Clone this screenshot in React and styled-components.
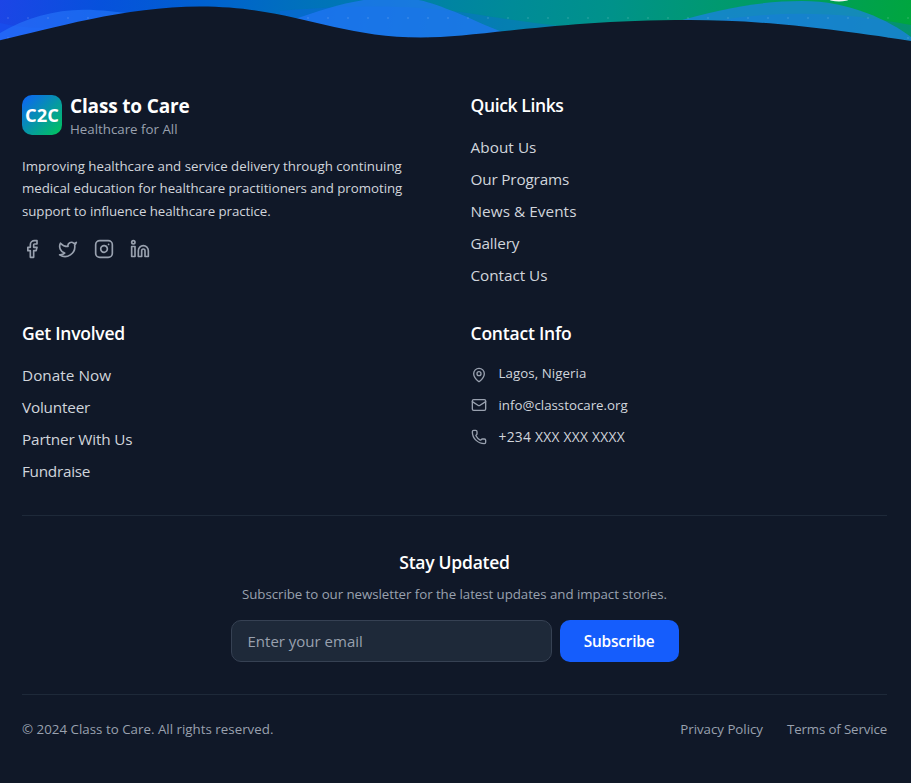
import React from "react";
import styled, { createGlobalStyle } from "styled-components";
import { Facebook, Twitter, Instagram, Linkedin, MapPin, Mail, Phone } from "lucide-react";

const GlobalStyle = createGlobalStyle`
  *, *::before, *::after { box-sizing: border-box; }
  body { margin: 0; background: #fff; overflow: hidden; }
  h3, p, ul { margin: 0; padding: 0; }
  a { color: inherit; text-decoration: none; }
`;

const Page = styled.footer`
  width: 911px;
  height: 783px;
  background: #101828;
  color: #fff;
  font-family: "Open Sans", "Noto Sans", sans-serif;
`;

const Wave = styled.svg`
  display: block;
  width: 911px;
  height: 50px;
`;

const Content = styled.div`
  padding: 41px 24px 0 22px;
`;

const Columns = styled.div`
  display: grid;
  grid-template-columns: 1fr 1fr;
  gap: 32px;
  padding-bottom: 32px;
`;

const Brand = styled.div`
  display: flex;
  align-items: center;
  gap: 8px;
  margin-bottom: 16px;
`;

const Logo = styled.div`
  display: flex;
  align-items: center;
  justify-content: center;
  width: 40px;
  height: 40px;
  border-radius: 10px;
  background: linear-gradient(135deg, #0d62fa, #00c758);
  font-size: 18.3px;
  line-height: 28px;
  font-weight: 700;
`;

const BrandName = styled.h3`
  height: 28px;
  font-size: 19px;
  line-height: 30px;
  font-weight: 700;
  letter-spacing: -0.16px;
`;

const Small = styled.p`
  font-size: 13.3px;
  line-height: 20px;
  letter-spacing: ${(p) => p.$track || 0}px;
  color: #99a1af;
`;

const Description = styled.p`
  height: 68.25px;
  font-size: 13.3px;
  line-height: 22.3px;
  color: #d1d5dc;
`;

const Line = styled.span`
  display: block;
  white-space: nowrap;
  letter-spacing: ${(p) => p.$track || 0}px;
`;

const Socials = styled.div`
  display: flex;
  gap: 16px;
  margin-top: 16px;
  color: #99a1af;
  a { display: flex; }
`;

const Heading = styled.h3`
  height: 28px;
  margin-bottom: ${(p) => p.$gap ?? 16}px;
  font-size: 17.5px;
  line-height: 28px;
  font-weight: 600;
  letter-spacing: ${(p) => p.$track ?? -0.25}px;
`;

const Links = styled.ul`
  display: flex;
  flex-direction: column;
  gap: 8px;
  list-style: none;
`;

const LinkItem = styled.li`
  font-size: 15.3px;
  line-height: 24px;
  letter-spacing: ${(p) => p.$track || 0}px;
  color: #d1d5dc;
`;

const ContactList = styled.div`
  display: flex;
  flex-direction: column;
  gap: 12px;
`;

const ContactItem = styled.div`
  display: flex;
  align-items: ${(p) => (p.$top ? "flex-start" : "center")};
  gap: 12px;
  height: 20px;
  font-size: ${(p) => p.$size || 13.3}px;
  line-height: 20px;
  letter-spacing: ${(p) => p.$track || 0}px;
  color: #d1d5dc;
  svg { flex: none; color: #99a1af; margin-top: ${(p) => (p.$top ? 4 : 0)}px; }
`;

const Newsletter = styled.section`
  display: flex;
  flex-direction: column;
  align-items: center;
  padding: 32px 0;
  border-top: 1px solid #1e2939;
`;

const Form = styled.form`
  display: flex;
  gap: 8px;
  width: 448px;
  margin-top: 16px;
`;

const Input = styled.input`
  flex: 1;
  min-width: 0;
  height: 42px;
  padding: 0 16px;
  border: 1px solid #364153;
  border-radius: 10px;
  background: #1e2939;
  color: #fff;
  font: 400 15px "Open Sans", sans-serif;
  outline: none;
  &::placeholder { color: #99a1af; opacity: 1; }
`;

const Button = styled.button`
  width: 119px;
  height: 42px;
  padding: 0;
  border: 0;
  border-radius: 10px;
  background: #155dfc;
  color: #fff;
  font: 600 15.4px "Open Sans", sans-serif;
  letter-spacing: -0.18px;
`;

const Bottom = styled.div`
  display: flex;
  justify-content: space-between;
  padding-top: 24px;
  border-top: 1px solid #1e2939;
`;

const Legal = styled.div`
  display: flex;
  gap: 24px;
`;

const quickLinks = [
  ["About Us", 0.06], ["Our Programs", -0.17], ["News & Events", 0.06], ["Gallery", -0.16], ["Contact Us", -0.04],
];
const involvedLinks = [["Donate Now", 0.03], ["Volunteer", -0.19], ["Partner With Us", -0.16], ["Fundraise", -0.27]];

function LinkList({ items }) {
  return (
    <Links>
      {items.map(([label, track]) => (
        <LinkItem key={label} $track={track}><a href="#">{label}</a></LinkItem>
      ))}
    </Links>
  );
}

function HeroWave() {
  return (
    <Wave viewBox="0 0 911 50">
      <defs>
        <linearGradient id="hero" gradientUnits="userSpaceOnUse" x1="0" y1="0" x2="900" y2="120">
          <stop offset="0" stopColor="#1c45e6" />
          <stop offset="0.11" stopColor="#0651dc" />
          <stop offset="0.22" stopColor="#0060d0" />
          <stop offset="0.33" stopColor="#0071bc" />
          <stop offset="0.45" stopColor="#0080a8" />
          <stop offset="0.56" stopColor="#008b98" />
          <stop offset="0.67" stopColor="#00928a" />
          <stop offset="0.8" stopColor="#009a6c" />
          <stop offset="0.92" stopColor="#00a052" />
          <stop offset="1" stopColor="#00a63e" />
        </linearGradient>
        <pattern id="dots" width="20" height="20" patternUnits="userSpaceOnUse" x="7" y="7">
          <circle cx="1" cy="11" r="1" fill="#fff" fillOpacity="0.12" />
        </pattern>
      </defs>
      <rect width="911" height="50" fill="url(#hero)" />
      <ellipse cx="839" cy="-1" rx="10" ry="2.6" fill="#f3f4f6" />
      <path d="M0 23C30 31 65 28 110 20V50H0Z" fill="#155dfc" fillOpacity="0.3" />
      <path d="M280 11C360 4 415 6 460 12C500 18 525 22 560 26V50H280Z" fill="#155dfc" fillOpacity="0.25" />
      <path d="M720 20C785 10 845 12 911 25V50H720Z" fill="#155dfc" fillOpacity="0.25" />
      <path d="M0 33C25 18 55 9.8 83 9.8C102 9.8 118 12 140 15V50H0Z" fill="#2b7fff" fillOpacity="0.5" />
      <path d="M295 19C325 9 355 -2 393 -2.5C420 -2.5 437 5 454 11.6C470 18 485 26 510 35V50H295Z" fill="#2477fa" fillOpacity="0.66" />
      <path d="M675 22C720 9 760 1 802 1C850 1 888 20 911 37V50H675Z" fill="#207cfa" fillOpacity="0.62" />
      <rect width="911" height="50" fill="url(#dots)" />
      <path d="M0 40.3C50 29 125 6.5 200 6.5C292 6.5 335 37.5 421 37.5C480 37.5 555 20 690 20C750 20 815 26 911 41V50H0Z" fill="#101828" />
    </Wave>
  );
}

export default function App() {
  return (
    <>
      <GlobalStyle />
      <Page>
        <HeroWave />
        <Content>
          <Columns>
            <div>
              <Brand>
                <Logo>C2C</Logo>
                <div>
                  <BrandName>Class to Care</BrandName>
                  <Small>Healthcare for All</Small>
                </div>
              </Brand>
              <Description>
                <Line $track={-0.01}>Improving healthcare and service delivery through continuing</Line>
                <Line $track={-0.04}>medical education for healthcare practitioners and promoting</Line>
                <Line $track={-0.06}>support to influence healthcare practice.</Line>
              </Description>
              <Socials>
                <a href="#" aria-label="Facebook"><Facebook size={20} /></a>
                <a href="#" aria-label="Twitter"><Twitter size={20} /></a>
                <a href="#" aria-label="Instagram"><Instagram size={20} /></a>
                <a href="#" aria-label="LinkedIn"><Linkedin size={20} /></a>
              </Socials>
            </div>
            <div>
              <Heading $track={-0.37}>Quick Links</Heading>
              <LinkList items={quickLinks} />
            </div>
            <div>
              <Heading>Get Involved</Heading>
              <LinkList items={involvedLinks} />
            </div>
            <div>
              <Heading $track={-0.21}>Contact Info</Heading>
              <ContactList>
                <ContactItem $top $track={0.07}><MapPin size={16} />Lagos, Nigeria</ContactItem>
                <ContactItem><Mail size={16} />info@classtocare.org</ContactItem>
                <ContactItem $size={13.8} $track={0.26}><Phone size={16} />+234 XXX XXX XXXX</ContactItem>
              </ContactList>
            </div>
          </Columns>
          <Newsletter>
            <Heading $gap={8}>Stay Updated</Heading>
            <Small $track={-0.055}>Subscribe to our newsletter for the latest updates and impact stories.</Small>
            <Form>
              <Input type="email" placeholder="Enter your email" />
              <Button type="button">Subscribe</Button>
            </Form>
          </Newsletter>
          <Bottom>
            <Small $track={0.02}>© 2024 Class to Care. All rights reserved.</Small>
            <Legal>
              <Small $track={-0.03}><a href="#">Privacy Policy</a></Small>
              <Small $track={-0.14}><a href="#">Terms of Service</a></Small>
            </Legal>
          </Bottom>
        </Content>
      </Page>
    </>
  );
}
